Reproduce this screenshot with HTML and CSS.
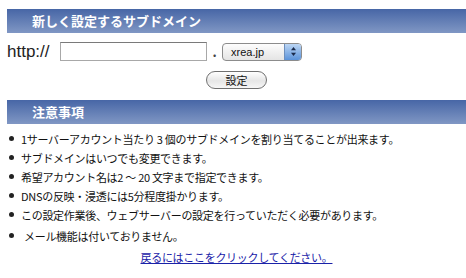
FILE: index.html
```html
<!DOCTYPE html>
<html lang="ja">
<head>
  <meta charset="UTF-8" />
  <title>サブドメイン設定</title>
  <link rel="stylesheet" href="styles.css">
</head>
<body>
  <div class="page">
    <h2 class="bar">新しく設定するサブドメイン</h2>

    <form class="sub-form">
      <div class="domain-row">
        <span class="proto">http://</span>
        <input type="text" class="sub-input" name="sub" />
        <span class="dot">.</span>
        <div class="select">
          <span class="select-text">xrea.jp</span>
          <span class="select-arrows">
            <svg width="9" height="11" viewBox="0 0 9 11">
              <path d="M4.5 1 L7 4.2 L2 4.2 Z" fill="#1a2a4a"/>
              <path d="M4.5 10 L7 6.8 L2 6.8 Z" fill="#1a2a4a"/>
            </svg>
          </span>
        </div>
      </div>
      <div class="button-row">
        <button type="submit" class="btn">設定</button>
      </div>
    </form>

    <h2 class="bar">注意事項</h2>

    <ul class="notes">
      <li>1サーバーアカウント当たり 3 個のサブドメインを割り当てることが出来ます。</li>
      <li>サブドメインはいつでも変更できます。</li>
      <li>希望アカウント名は2 〜 20 文字まで指定できます。</li>
      <li>DNSの反映・浸透には5分程度掛かります。</li>
      <li>この設定作業後、ウェブサーバーの設定を行っていただく必要があります。</li>
      <li class="last">メール機能は付いておりません。</li>
    </ul>

    <p class="back"><a href="#">戻るにはここをクリックしてください。</a></p>
  </div>
</body>
</html>
```

FILE: styles.css
```css
body {
  margin: 0;
  background: #fff;
  font-family: "Noto Sans CJK JP", "Noto Sans", sans-serif;
  color: #111;
}

.page {
  padding: 9px 0 0 7px;
}

.bar {
  margin: 0;
  height: 24px;
  line-height: 24px;
  padding-left: 25px;
  background: linear-gradient(#4766a6, #8097c4);
  color: #fff;
  font-size: 13px;
  font-weight: bold;
}

.sub-form {
  margin: 0;
  padding: 9px 0 11px;
}

.domain-row {
  display: flex;
  align-items: center;
  height: 19px;
}

.proto {
  font-family: "Liberation Sans", Arial, sans-serif;
  font-size: 17px;
  color: #222;
  width: 53px;
}

.sub-input {
  width: 147px;
  height: 19px;
  box-sizing: border-box;
  border: 1px solid #a8a8a8;
  border-top-color: #7a7a7a;
  padding: 0 3px;
  margin: 0;
}

.dot {
  width: 15px;
  text-align: center;
  font-size: 13px;
  font-weight: bold;
  color: #444;
}

.select {
  display: flex;
  width: 80px;
  height: 18px;
  box-sizing: border-box;
  border: 1px solid #8c8c8c;
  border-radius: 4px;
  overflow: hidden;
  background: linear-gradient(#fdfdfd, #e4e4e4);
}

.select-text {
  flex: 1;
  font-family: "Liberation Sans", Arial, sans-serif;
  font-size: 11px;
  line-height: 16px;
  padding-left: 8px;
  color: #111;
}

.select-arrows {
  width: 16px;
  display: flex;
  align-items: center;
  justify-content: center;
  background: linear-gradient(#bcd6f4, #5b93da);
  border-left: 1px solid #6d8fbd;
}

.button-row {
  display: flex;
  justify-content: center;
  margin-top: 10px;
}

.btn {
  width: 61px;
  height: 18px;
  padding: 0;
  border: 1px solid #707070;
  border-radius: 9px;
  background: linear-gradient(#ffffff, #e6e6e6 55%, #f6f6f6);
  font-family: "Noto Sans CJK JP", sans-serif;
  font-size: 11px;
  line-height: 16px;
  color: #111;
}

.notes {
  list-style: none;
  margin: 0;
  padding: 5px 0 0 2px;
  font-size: 11px;
  letter-spacing: -0.3px;
}

.notes li {
  display: flex;
  align-items: center;
  height: 19px;
}

.notes li::before {
  content: "";
  width: 5px;
  height: 5px;
  border-radius: 50%;
  background: #222;
  margin-right: 7px;
}

.notes li.last {
  margin-top: 2px;
}

.notes li.last::before {
  margin-right: 10px;
}

.back {
  margin: 4px 0 0;
  text-align: center;
  font-size: 11px;
  letter-spacing: -0.3px;
}

.back a {
  color: #1a22a8;
}
```
